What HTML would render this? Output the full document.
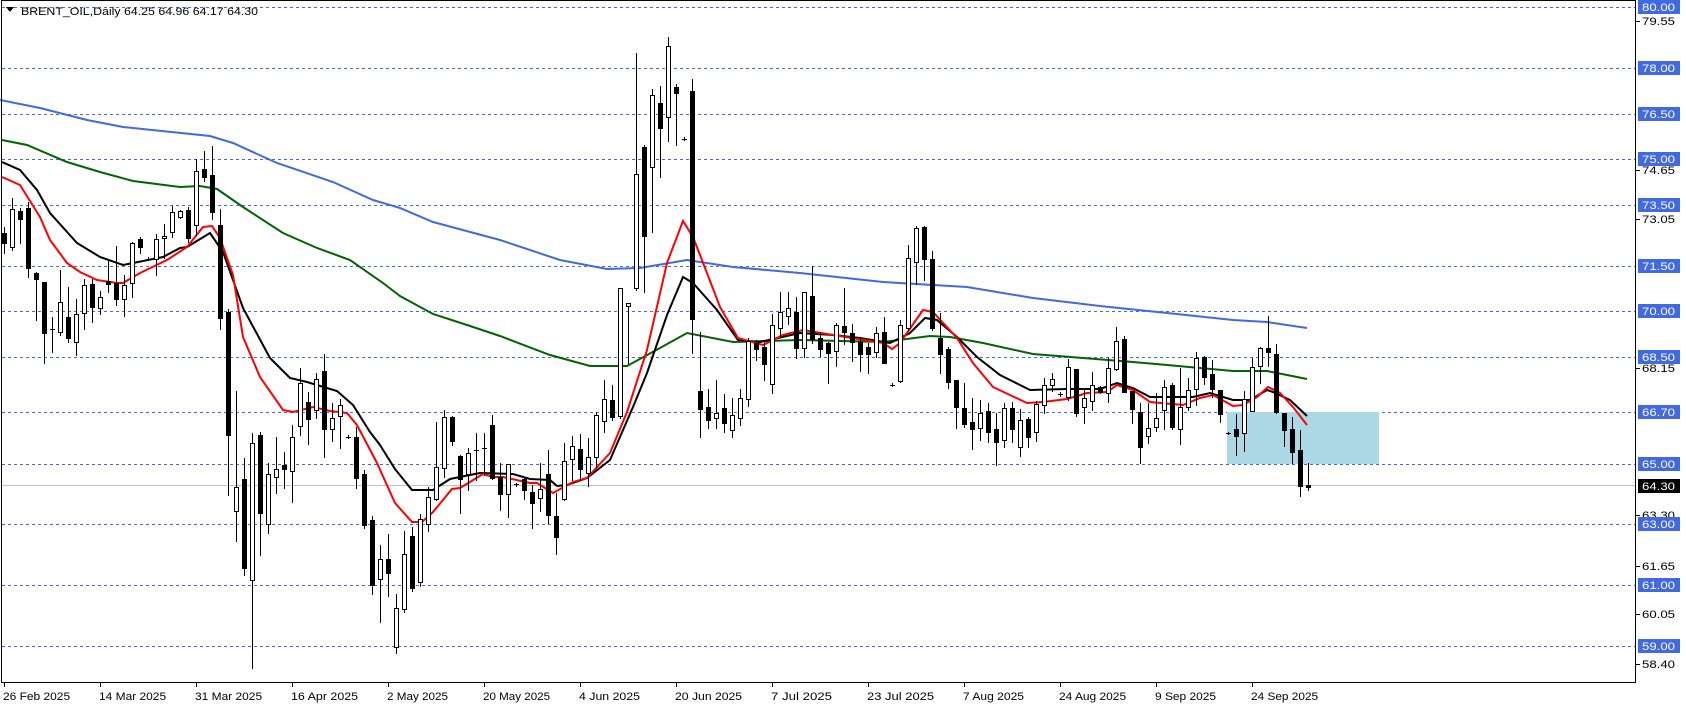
<!DOCTYPE html>
<html><head><meta charset="utf-8"><style>
html,body{margin:0;padding:0;background:#fff;width:1686px;height:707px;overflow:hidden}
svg{display:block}
text{font-family:"Liberation Sans",sans-serif;font-size:11px}
</style></head><body>
<svg id="c" width="1686" height="707" xmlns="http://www.w3.org/2000/svg" shape-rendering="crispEdges">
<rect x="0" y="0" width="1686" height="707" fill="#fff"/>
<g id="grid"></g>
<rect x="1227" y="412" width="152" height="52" fill="#add8e6"/>
<line x1="2" y1="485.5" x2="1636" y2="485.5" stroke="#c0c0c0" stroke-width="1"/>
<g id="ma" fill="none" stroke-width="2" shape-rendering="auto"></g>
<g id="cd"></g>
<rect x="1.5" y="0.5" width="1634" height="682" fill="none" stroke="#000" stroke-width="1"/>
<polygon points="6,7 14,7 10,12" fill="#000"/>
<text x="21" y="15" textLength="237" lengthAdjust="spacingAndGlyphs" font-size="12">BRENT_OIL,Daily  64.25 64.96 64.17 64.30</text>
<g id="ax" font-size="12"></g>
<g id="tx" font-size="12"></g>
</svg>
<script>
var NS="http://www.w3.org/2000/svg";
function el(t,a,p,txt){var e=document.createElementNS(NS,t);for(var k in a)e.setAttribute(k,a[k]);if(txt!=null)e.textContent=txt;document.getElementById(p).appendChild(e);return e;}
function Y(p){return 159.3+(75-p)*30.43;}
var lv=[80,78,76.5,75,73.5,71.5,70,68.5,66.7,65,63,61,59];
lv.forEach(function(p){var y=Math.round(Y(p))+0.5;el("line",{x1:2,y1:y,x2:1636,y2:y,stroke:"#4169e1","stroke-width":1,"stroke-dasharray":"3,3"},"grid");});
[[79.55],[74.65],[73.05],[68.15],[63.30],[61.65],[60.05],[58.40]].forEach(function(a){var y=Math.round(Y(a[0]));el("line",{x1:1636,y1:y+.5,x2:1640,y2:y+.5,stroke:"#000"},"ax");el("text",{x:1642,y:y+4,textLength:33,lengthAdjust:"spacingAndGlyphs"},"ax",a[0].toFixed(2));});
lv.forEach(function(p){var y=Math.round(Y(p));el("rect",{x:1638,y:y-7,width:42,height:14,fill:"#4169e1"},"ax");el("text",{x:1642,y:y+4,fill:"#fff",textLength:33,lengthAdjust:"spacingAndGlyphs"},"ax",p.toFixed(2));});
el("rect",{x:1638,y:479,width:42,height:14,fill:"#000"},"ax");el("text",{x:1642,y:490,fill:"#fff",textLength:33,lengthAdjust:"spacingAndGlyphs"},"ax","64.30");
var tl=["26 Feb 2025","14 Mar 2025","31 Mar 2025","16 Apr 2025","2 May 2025","20 May 2025","4 Jun 2025","20 Jun 2025","7 Jul 2025","23 Jul 2025","7 Aug 2025","24 Aug 2025","9 Sep 2025","24 Sep 2025"];
tl.forEach(function(t,i){var x=4+96*i;el("line",{x1:x+.5,y1:683,x2:x+.5,y2:687,stroke:"#000"},"tx");var e=el("text",{x:x-1,y:700},"tx",t);e.setAttribute("textLength",t.length*6.1);e.setAttribute("lengthAdjust","spacingAndGlyphs");});
var MA={
"#4169e1":[[0,100],[40,108],[87,120],[123,127],[210,136],[233,143],[277,163],[333,182],[373,200],[400,208],[433,222],[500,240],[560,260],[607,269],[640,268],[687,260],[733,267],[800,273],[883,282],[967,287],[1033,298],[1100,306],[1167,313],[1233,320],[1267,322],[1307,328]],
"#006400":[[2,140],[27,145],[67,162],[100,172],[133,181],[180,187],[200,186],[217,189],[243,207],[283,233],[317,248],[350,260],[383,283],[400,296],[433,314],[467,325],[500,336],[550,355],[590,366],[627,366],[660,348],[687,333],[733,342],[800,340],[883,342],[930,336],[950,337],[983,343],[1033,354],[1083,358],[1133,362],[1167,365],[1200,368],[1233,371],[1267,371],[1287,375],[1307,379]],
"#000000":[[2,162],[20,170],[37,190],[50,213],[77,243],[100,257],[123,265],[143,261],[163,257],[180,248],[187,247],[210,233],[223,252],[243,308],[270,358],[290,378],[307,382],[337,391],[353,405],[370,432],[380,445],[395,469],[412,490],[433,490],[450,479],[480,473],[513,474],[530,479],[550,480],[557,486],[567,485],[587,478],[610,460],[633,407],[647,373],[667,315],[683,277],[693,283],[717,310],[738,340],[760,342],[800,333],[833,335],[860,338],[890,343],[910,333],[925,318],[937,320],[957,337],[977,357],[1000,375],[1030,390],[1067,389],[1100,389],[1117,383],[1133,388],[1150,397],[1193,397],[1210,393],[1233,400],[1250,400],[1267,390],[1273,392],[1290,400],[1307,416]],
"#ff0000":[[2,177],[20,185],[40,217],[50,240],[67,263],[80,272],[97,280],[117,283],[123,283],[140,273],[167,260],[187,247],[203,227],[212,226],[220,238],[233,275],[243,337],[260,377],[283,410],[293,412],[313,407],[330,411],[347,413],[357,425],[377,463],[395,503],[412,522],[422,522],[433,512],[452,489],[460,488],[483,474],[493,477],[503,477],[530,483],[537,483],[553,493],[573,482],[587,478],[610,453],[627,412],[647,350],[667,263],[683,221],[693,237],[707,273],[720,307],[738,338],[763,345],[783,335],[803,330],[833,335],[883,343],[892,349],[900,343],[923,310],[933,312],[957,338],[973,363],[993,387],[1027,403],[1043,402],[1067,399],[1087,393],[1107,392],[1117,385],[1133,390],[1150,402],[1183,405],[1200,398],[1213,395],[1233,406],[1243,405],[1257,397],[1268,387],[1280,393],[1293,407],[1307,425]]
};
for(var c in MA){el("polyline",{points:MA[c].map(function(p){return p.join(",")}).join(" "),stroke:c},"ma");}
var D=[[227,233,243,253,0],[198,209,247,250,1],[208,211,219,243,0],[202,208,268,277,0],[272,273,279,320,0],[282,282,333,363,0],[317,329,329,352,0],[270,302,332,335,1],[287,317,338,342,0],[299,314,342,355,1],[279,285,313,329,1],[279,284,307,322,0],[291,297,308,314,1],[259,281,284,292,0],[246,283,299,305,0],[275,285,299,316,1],[242,243,283,297,1],[237,239,247,253,0],[257,259,259,260,0],[234,239,259,275,1],[224,236,238,258,1],[206,212,232,237,1],[210,211,217,218,1],[207,210,238,242,0],[159,171,225,235,1],[151,169,177,181,0],[146,175,212,219,0],[209,225,318,329,0],[309,312,435,495,0],[391,487,511,541,1],[458,479,568,575,0],[433,443,580,668,1],[432,435,513,555,0],[463,474,524,533,1],[437,469,477,493,1],[452,465,469,488,0],[425,437,471,502,1],[368,383,426,435,1],[392,402,419,444,0],[373,379,410,418,1],[354,371,429,457,0],[403,418,429,441,1],[399,405,416,448,1],[435,437,437,438,0],[427,437,478,488,0],[470,474,525,528,0],[516,520,585,594,0],[545,559,579,622,1],[534,559,573,596,0],[594,608,647,653,1],[531,554,609,612,1],[527,536,588,591,0],[514,519,582,586,1],[487,497,524,531,1],[422,467,499,500,1],[410,417,468,477,1],[416,417,441,445,0],[455,456,479,513,0],[448,453,474,490,1],[433,450,450,480,0],[433,448,448,475,0],[415,425,478,479,0],[463,477,494,510,0],[464,464,494,517,1],[483,484,484,486,0],[477,479,490,499,0],[485,492,503,528,0],[463,489,498,511,1],[450,474,515,523,0],[493,516,537,554,0],[443,461,499,500,1],[436,446,459,480,1],[434,449,469,480,0],[438,457,473,486,1],[412,415,457,467,1],[380,399,421,432,1],[385,400,417,420,0],[288,288,416,418,1],[303,303,306,363,1],[53,174,288,290,1],[145,147,236,292,0],[89,95,167,232,1],[86,103,128,177,0],[37,46,117,141,1],[84,87,93,145,0],[137,139,139,140,0],[79,91,319,353,0],[332,391,409,437,0],[389,407,420,428,0],[380,413,418,428,1],[394,408,423,432,0],[398,415,430,437,1],[389,398,418,425,1],[338,341,399,406,1],[340,343,349,360,0],[340,347,364,380,0],[314,325,384,393,1],[292,312,328,337,1],[292,308,316,324,1],[297,312,348,358,0],[292,292,348,357,1],[266,296,339,343,0],[332,338,349,356,0],[342,343,353,383,0],[323,325,351,366,1],[288,326,332,344,0],[324,333,342,361,0],[337,342,354,371,0],[343,347,354,373,0],[327,333,352,357,1],[317,332,363,363,0],[383,385,385,386,0],[320,325,381,382,1],[245,258,328,330,1],[226,228,262,284,1],[226,227,259,280,0],[251,259,328,330,0],[313,338,354,373,0],[347,349,382,388,0],[380,380,407,428,0],[383,408,424,427,0],[398,422,429,449,0],[400,413,428,440,1],[403,411,432,442,0],[413,429,442,465,0],[403,408,440,447,1],[402,408,429,442,0],[409,420,447,456,1],[417,419,437,447,0],[401,404,432,441,1],[378,385,405,413,1],[373,379,385,391,1],[392,394,394,396,0],[359,367,397,400,1],[369,369,413,416,0],[389,398,407,423,1],[372,385,401,410,1],[386,387,392,393,0],[358,368,393,402,1],[327,341,369,370,1],[336,339,392,392,0],[391,391,409,423,0],[403,412,447,463,0],[403,428,436,443,1],[393,418,427,431,1],[380,387,410,429,1],[383,385,427,429,0],[368,407,429,444,1],[378,390,407,410,1],[352,358,389,405,1],[356,357,377,384,0],[360,374,389,397,0],[390,390,414,422,0],[432,433,433,434,0],[414,429,436,455,0],[391,399,433,451,1],[358,367,411,411,1],[347,348,366,383,1],[316,348,352,366,0],[344,354,412,413,0],[413,413,430,446,0],[417,429,452,463,0],[430,450,486,496,0],[463,485,487,490,0]];
D.forEach(function(d,i){var x=4+8*i;
el("line",{x1:x+.5,y1:d[0],x2:x+.5,y2:d[3]+1,stroke:"#000","stroke-width":1},"cd");
var h=Math.max(d[2]-d[1],0);
if(h<2){el("line",{x1:x-2,y1:d[1]+.5,x2:x+3,y2:d[1]+.5,stroke:"#000"},"cd");}
else el("rect",{x:x-1.5,y:d[1]+.5,width:4,height:h,fill:d[4]?"#fff":"#000",stroke:"#000","stroke-width":1},"cd");
});
</script>
</body></html>
